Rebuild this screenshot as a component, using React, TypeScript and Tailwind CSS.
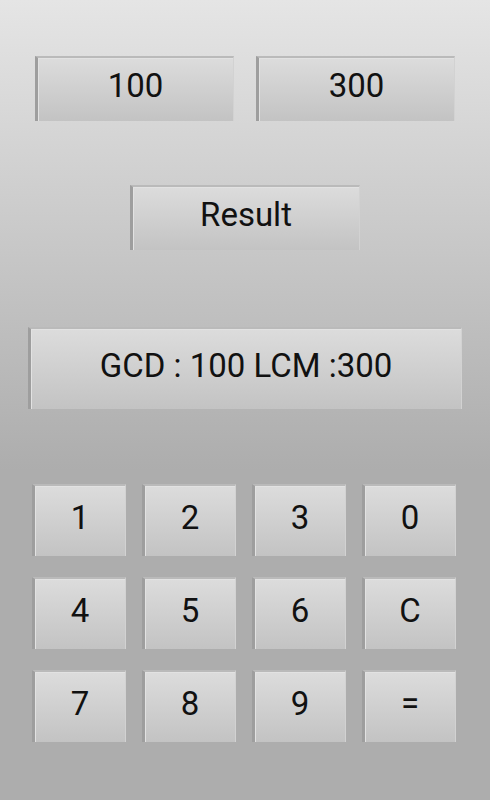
import React from "react";

function Box({ className, children }: { className: string; children: React.ReactNode }) {
  return (
    <div
      className={
        "flex items-center justify-center text-[#111111] text-[33px] bg-[linear-gradient(to_bottom,#dcdcdc,#c3c3c3)] border-l-[3px] border-l-[#9e9e9e] border-t-2 border-t-[#bababa] border-r border-r-[#d2d2d2] shadow-[inset_1px_1px_0_#e2e2e2] " +
        className
      }
      style={{ fontFamily: "Roboto, 'Liberation Sans', sans-serif" }}
    >
      {children}
    </div>
  );
}

export default function App() {
  const keys = ["1", "2", "3", "0", "4", "5", "6", "C", "7", "8", "9", "="];
  return (
    <div className="w-[490px] h-[800px] overflow-hidden bg-[linear-gradient(to_bottom,#e5e5e5_0px,#adadad_470px,#adadad_800px)] flex flex-col items-center">
      <div className="mt-[56px] flex gap-[22px]">
        <Box className="w-[199px] h-[65px] pb-[7px]">100</Box>
        <Box className="w-[199px] h-[65px] pb-[7px]">300</Box>
      </div>
      <Box className="mt-[64px] w-[230px] h-[65px] pb-[7px]">Result</Box>
      <Box className="mt-[77px] w-[434px] h-[82px] pb-[6px]">GCD : 100 LCM :300</Box>
      <div className="mt-[75px] ml-[-2px] grid grid-cols-[repeat(4,94px)] auto-rows-[72px] gap-x-[16px] gap-y-[21px]">
        {keys.map((k) => (
          <Box key={k} className="pb-[6px]">
            {k}
          </Box>
        ))}
      </div>
    </div>
  );
}
